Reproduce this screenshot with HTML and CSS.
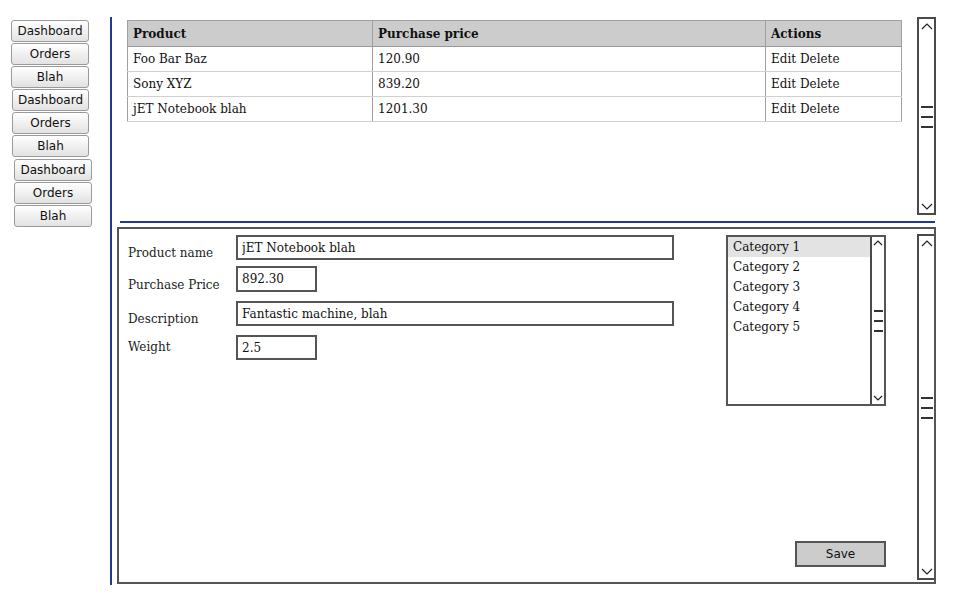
FILE: index.html
```html
<!DOCTYPE html>
<html>
	<head>
		<title>Products</title>
		<link rel="stylesheet" href="styles.css">
	</head>
	<body>
		<div class="page">
			<nav class="side">
				<div class="group first">
					<button class="nav-btn">Dashboard</button>
					<button class="nav-btn">Orders</button>
					<button class="nav-btn">Blah</button>
				</div>
				<div class="group second">
					<button class="nav-btn">Dashboard</button>
					<button class="nav-btn">Orders</button>
					<button class="nav-btn">Blah</button>
				</div>
				<div class="group third">
					<button class="nav-btn">Dashboard</button>
					<button class="nav-btn">Orders</button>
					<button class="nav-btn">Blah</button>
				</div>
			</nav>
			<main class="main">
				<section class="top">
					<table class="grid">
						<thead>
							<tr>
								<th class="name">Product</th>
								<th class="price">Purchase price</th>
								<th class="actions last">Actions</th>
							</tr>
						</thead>
						<tbody>
							<tr>
								<td class="name">Foo Bar Baz</td>
								<td class="price">120.90</td>
								<td class="actions last">Edit Delete</td>
							</tr>
							<tr>
								<td class="name">Sony XYZ</td>
								<td class="price">839.20</td>
								<td class="actions last">Edit Delete</td>
							</tr>
							<tr>
								<td class="name">jET Notebook blah</td>
								<td class="price">1201.30</td>
								<td class="actions last">Edit Delete</td>
							</tr>
						</tbody>
					</table>
					<div class="scroll tall">
						<svg class="arrow" width="12" height="7" viewBox="0 0 12 7"><polyline points="1,6 6,1 11,6"/></svg>
						<div class="thumb"><span></span><span></span><span></span></div>
						<svg class="arrow" width="12" height="7" viewBox="0 0 12 7"><polyline points="1,1 6,6 11,1"/></svg>
					</div>
				</section>
				<hr class="rule">
				<section class="panel">
					<form class="form">
						<div class="field">
							<label>Product name</label>
							<input class="wide" type="text" value="jET Notebook blah">
						</div>
						<div class="field near">
							<label>Purchase Price</label>
							<input class="short tall-in" type="text" value="892.30">
						</div>
						<div class="field gap">
							<label>Description</label>
							<input class="wide" type="text" value="Fantastic machine, blah">
						</div>
						<div class="field gap">
							<label class="raised">Weight</label>
							<input class="short" type="text" value="2.5">
						</div>
					</form>
					<div class="side-col">
						<div class="listbox">
							<ul>
								<li class="on">Category 1</li>
								<li>Category 2</li>
								<li>Category 3</li>
								<li>Category 4</li>
								<li>Category 5</li>
							</ul>
							<div class="scroll mini">
								<svg class="arrow" width="10" height="6" viewBox="0 0 10 6"><polyline points="1,5 5,1 9,5"/></svg>
								<div class="thumb"><span></span><span></span><span></span></div>
								<svg class="arrow" width="10" height="6" viewBox="0 0 10 6"><polyline points="1,1 5,5 9,1"/></svg>
							</div>
						</div>
						<button class="save" type="button">Save</button>
					</div>
					<div class="scroll long">
						<svg class="arrow" width="12" height="7" viewBox="0 0 12 7"><polyline points="1,6 6,1 11,6"/></svg>
						<div class="thumb"><span></span><span></span><span></span></div>
						<svg class="arrow" width="12" height="7" viewBox="0 0 12 7"><polyline points="1,1 6,6 11,1"/></svg>
					</div>
				</section>
			</main>
		</div>
	</body>
</html>
```

FILE: styles.css
```css
html
{
	min-height:600px;
}
body
{
	margin:0px;
	min-height:600px;
	font-family:"DejaVu Serif", serif;
	font-size:12px;
	color:#111111;
	background:#ffffff;
}
.page
{
	display:flex;
	align-items:flex-start;
	padding-top:17px;
}

/* left navigation */
.side
{
	width:110px;
	flex:none;
	padding-top:3px;
}
.group
{
	display:flex;
	flex-direction:column;
	gap:1px;
	width:78px;
}
.group.first
{
	margin-left:11px;
}
.group.second
{
	margin-left:12px;
	margin-top:1px;
	width:77px;
}
.group.third
{
	margin-left:14px;
	margin-top:2px;
}
.nav-btn
{
	height:22px;
	padding:0px;
	border:1px solid #9a9a9a;
	border-radius:3px;
	background:linear-gradient(#ffffff, #e2e2e2);
	font-family:"DejaVu Sans", sans-serif;
	font-size:12px;
	color:#111111;
}

/* main area */
.main
{
	width:826px;
	height:568px;
	border-left:2px solid #213a8f;
}
.top
{
	display:flex;
	align-items:flex-start;
	height:198px;
}
.grid
{
	margin:3px 0px 0px 15px;
	width:775px;
	border-collapse:collapse;
	border:1px solid #a0a0a0;
}
th, td
{
	padding:0px 5px;
	text-align:left;
	border-right:1px solid #a0a0a0;
}
th.last, td.last
{
	border-right:0px;
}
th
{
	height:25px;
	background-color:#cccccc;
	border-bottom:1px solid #999999;
}
td
{
	height:24px;
	border-bottom:1px solid #d0d0d0;
}
.grid .name
{
	width:234px;
}
.grid .price
{
	width:382px;
}

/* scrollbars */
.scroll
{
	box-sizing:border-box;
	display:flex;
	flex-direction:column;
	justify-content:space-between;
	align-items:center;
	border:2px solid #4a4a4a;
	background:#ffffff;
}
.scroll.tall
{
	margin-left:15px;
	width:19px;
	height:198px;
	padding:4px 0px 3px;
}
.scroll.long
{
	margin:5px 0px 0px 31px;
	width:17px;
	height:346px;
	border-right:0px;
	padding:4px 0px 3px;
}
.scroll.mini
{
	width:14px;
	border-width:0px 0px 0px 2px;
	padding:3px 0px 3px;
}
.arrow polyline
{
	fill:none;
	stroke:#222222;
	stroke-width:1.2;
}
.thumb
{
	display:flex;
	flex-direction:column;
	gap:8px;
}
.thumb span
{
	display:block;
	width:12px;
	height:2px;
	background:#333333;
}
.mini .thumb span
{
	width:9px;
}

.rule
{
	margin:6px 0px 0px 8px;
	width:815px;
	height:2px;
	border:0px;
	background:#213a8f;
}

/* edit panel */
.panel
{
	box-sizing:border-box;
	display:flex;
	align-items:flex-start;
	margin:4px 0px 0px 5px;
	width:819px;
	height:357px;
	border:2px solid #555555;
}
.form
{
	margin:0px;
	padding:6px 0px 0px 9px;
	width:546px;
	flex:none;
}
.field
{
	display:flex;
	align-items:flex-end;
}
.field.near
{
	margin-top:6px;
}
.field.gap
{
	margin-top:9px;
}
.field label
{
	width:108px;
	flex:none;
	line-height:13px;
	color:#222222;
}
.field label.raised
{
	padding-bottom:6px;
}
.field input
{
	box-sizing:border-box;
	height:25px;
	margin:0px;
	padding:0px 4px;
	border:2px solid #555555;
	font-family:"DejaVu Serif", serif;
	font-size:12px;
	color:#111111;
}
.field input.wide
{
	width:438px;
}
.field input.short
{
	width:81px;
}
.field input.tall-in
{
	height:26px;
}

.side-col
{
	box-sizing:border-box;
	display:flex;
	flex-direction:column;
	justify-content:space-between;
	margin-left:52px;
	padding:6px 0px 15px;
	width:160px;
	height:100%;
}
.listbox
{
	box-sizing:border-box;
	display:flex;
	height:171px;
	border:2px solid #555555;
}
.listbox ul
{
	flex:1;
	margin:0px;
	padding:0px;
	list-style:none;
}
.listbox li
{
	height:20px;
	line-height:20px;
	padding-left:5px;
}
.listbox li.on
{
	background-color:#e3e3e3;
}
.save
{
	align-self:flex-end;
	width:91px;
	height:26px;
	padding:0px;
	border:2px solid #555555;
	background-color:#cccccc;
	font-family:"DejaVu Sans", sans-serif;
	font-size:12px;
	color:#111111;
}
```
